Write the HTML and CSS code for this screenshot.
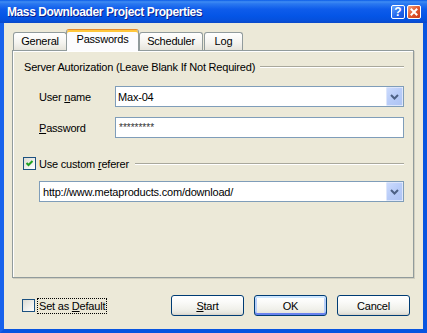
FILE: index.html
```html
<!DOCTYPE html>
<html lang="en">
<head>
    <meta charset="UTF-8">
    <meta name="viewport" content="width=device-width, initial-scale=1.0">
    <title>Mass Downloader Project Properties</title>
    <link rel="stylesheet" href="styles.css">
</head>
<body>
<div class="window">
    <div class="titlebar">
        <span class="title">Mass Downloader Project Properties</span>
        <div class="caption-buttons">
            <span class="cap help">?</span>
            <span class="cap close">
                <svg width="12" height="12" viewBox="0 0 12 12"><path d="M3.5 3.5 L8.5 8.5 M8.5 3.5 L3.5 8.5" stroke="#fff" stroke-width="2" stroke-linecap="square"/></svg>
            </span>
        </div>
    </div>

    <div class="client">
        <!-- tabs -->
        <div class="tabs">
            <div class="tab tab-general">General</div>
            <div class="tab tab-passwords active">Passwords</div>
            <div class="tab tab-scheduler">Scheduler</div>
            <div class="tab tab-log">Log</div>
        </div>

        <div class="panel">
            <div class="group-head">
                <span>Server Autorization (Leave Blank If Not Required)</span>
                <span class="rule"></span>
            </div>

            <div class="field-row first">
                <label>User <u>n</u>ame</label>
                <div class="combo">
                    <span class="value">Max-04</span>
                    <span class="drop"><svg width="9" height="6" viewBox="0 0 9 6"><path d="M1 1 L4.5 4.5 L8 1" fill="none" stroke="#4D6185" stroke-width="2"/></svg></span>
                </div>
            </div>

            <div class="field-row">
                <label><u>P</u>assword</label>
                <div class="textbox"><span class="value secret">*********</span></div>
            </div>

            <div class="group-head check-head">
                <span class="checkbox"><svg width="11" height="11" viewBox="0 0 11 11"><path d="M2.5 5 L4.5 7 L8.5 3" fill="none" stroke="#21A121" stroke-width="2"/></svg></span>
                <span>Use custom <u>r</u>eferer</span>
                <span class="rule"></span>
            </div>

            <div class="combo url">
                <span class="value">http://www.metaproducts.com/download/</span>
                <span class="drop"><svg width="9" height="6" viewBox="0 0 9 6"><path d="M1 1 L4.5 4.5 L8 1" fill="none" stroke="#4D6185" stroke-width="2"/></svg></span>
            </div>
        </div>

        <!-- bottom buttons -->
        <div class="footer">
            <div class="default-opt">
                <span class="checkbox"></span>
                <span class="focus">Set as <u>D</u>efault</span>
            </div>
            <div class="buttons">
                <button><u>S</u>tart</button>
                <button class="default">OK</button>
                <button>Cancel</button>
            </div>
        </div>
    </div>
</div>
</body>
</html>
```

FILE: styles.css
```css
body {
    margin: 0;
    font-family: "Liberation Sans", Arial, sans-serif;
    font-size: 11px;
    letter-spacing: -0.2px;
    color: #000;
}
.window {
    width: 427px;
    height: 333px;
    display: flex;
    flex-direction: column;
    background: #0855E0;
    box-shadow: inset -1px 0 0 #0021A8, inset 0 -1px 0 #0021A8;
}
/* title bar */
.titlebar {
    height: 23px;
    flex: none;
    display: flex;
    justify-content: space-between;
    padding: 0 6px 0 7px;
    background: linear-gradient(#0A5BE8 0%, #3F8CF3 8%, #2A78F0 16%, #0E5CEB 40%, #0455E6 70%, #0650DB 90%, #0A49C8 100%);
    color: #fff;
}
.title {
    font-weight: bold;
    font-size: 12px;
    letter-spacing: -0.4px;
    line-height: 24px;
    text-shadow: 1px 1px 0 #0A1E8C;
}
.caption-buttons {
    display: flex;
    gap: 2px;
    margin-top: 5px;
}
.cap {
    width: 14px;
    height: 14px;
    box-sizing: border-box;
    border: 1px solid #fff;
    border-radius: 2px;
    display: flex;
    align-items: center;
    justify-content: center;
}
.help {
    background: linear-gradient(135deg, #6AA6FD, #2266EE 55%, #1650D8);
    font-weight: bold;
    font-size: 12px;
    letter-spacing: 0;
}
.close {
    background: linear-gradient(135deg, #F4A27F, #E0582F 50%, #C9391A);
}
/* client area */
.client {
    flex: 1;
    background: #ECE9D8;
    border: 4px solid #0855E0;
    border-top: 0;
    border-left-color: #1862EC;
    padding: 6px 9px 0 8px;
    display: flex;
    flex-direction: column;
}
.tabs {
    display: flex;
    align-items: flex-end;
    height: 21px;
    padding-left: 1px;
    position: relative;
    z-index: 1;
}
.tab {
    height: 18px;
    box-sizing: border-box;
    border: 1px solid #919B9C;
    border-bottom: 0;
    border-radius: 3px 3px 0 0;
    background: linear-gradient(#FFFFFF, #F5F4F0 55%, #E6E4DB);
    text-align: center;
    line-height: 17px;
}
.tab.active {
    height: 22px;
    margin-bottom: -1px;
    background: #FCFCFE;
    border-top: 1px solid #E68B2C;
    box-shadow: inset 0 2px 0 #FFC73C;
    line-height: 19px;
}
.tab-general { width: 54px; }
.tab-passwords { width: 73px; margin-left: -1px; }
.tab-scheduler { width: 64px; }
.tab-log { width: 39px; margin-left: 1px; }

.panel {
    height: 228px;
    box-sizing: border-box;
    border: 1px solid #919B9C;
    background: #ECE9D8;
    padding: 9px 9px 0 11px;
    box-shadow: inset 1px 1px 0 #fff, 1px 1px 0 #D0CEBF;
}
.group-head {
    display: flex;
    align-items: center;
    height: 14px;
}
.rule {
    flex: 1;
    border-top: 1px solid #A9A89C;
    border-bottom: 1px solid #fff;
    margin-left: 5px;
}
.field-row {
    display: flex;
    align-items: center;
    margin-top: 10px;
    padding-left: 15px;
}
.field-row.first {
    margin-top: 12px;
}
.field-row label {
    width: 76px;
    flex: none;
}
.combo, .textbox {
    flex: 1;
    height: 21px;
    box-sizing: border-box;
    border: 1px solid #7F9DB9;
    background: #fff;
    display: flex;
    align-items: center;
    padding-left: 2px;
}
.value {
    flex: 1;
    white-space: nowrap;
}
.secret {
    font-size: 10px;
    letter-spacing: 0;
    color: #333;
    padding-left: 1px;
}
.drop {
    width: 17px;
    height: 19px;
    box-sizing: border-box;
    border: 1px solid #DDE6FB;
    border-radius: 1px;
    background: linear-gradient(135deg, #CCDBFD, #B8CCF8 50%, #AFC4F4);
    display: flex;
    align-items: center;
    justify-content: center;
}
.check-head {
    margin-top: 19px;
    height: 13px;
    margin-left: -1px;
}
.check-head .rule {
    margin-left: 6px;
}
.checkbox {
    width: 13px;
    height: 13px;
    flex: none;
    box-sizing: border-box;
    border: 1px solid #1C5180;
    background: linear-gradient(135deg, #DCDBD3, #FFFFFF);
    margin-right: 3px;
    display: flex;
}
.url {
    margin-top: 11px;
    margin-left: 15px;
    padding-left: 3px;
}
/* footer */
.footer {
    display: flex;
    align-items: center;
    margin-top: 17px;
    height: 21px;
}
.default-opt {
    display: flex;
    align-items: center;
    margin-left: 10px;
}
.default-opt .checkbox {
    margin-right: 2px;
}
.focus {
    border: 1px dotted #000;
    padding: 0 1px;
    line-height: 14px;
}
.buttons {
    margin-left: auto;
    margin-right: 4px;
    display: flex;
    gap: 10px;
}
button {
    width: 73px;
    height: 21px;
    padding: 0;
    font: inherit;
    letter-spacing: inherit;
    color: #000;
    border: 1px solid #003C74;
    border-radius: 3px;
    background: linear-gradient(#FFFFFF 0%, #FBFBF9 30%, #F0F0EA 70%, #E5E4DD 90%, #D6D0C5 100%);
}
button.default {
    box-shadow: inset 0 2px 0 #CEE7FF, inset 0 -2px 0 #6982EE, inset 2px 0 0 #B7CFF9, inset -2px 0 0 #B7CFF9;
}
```
